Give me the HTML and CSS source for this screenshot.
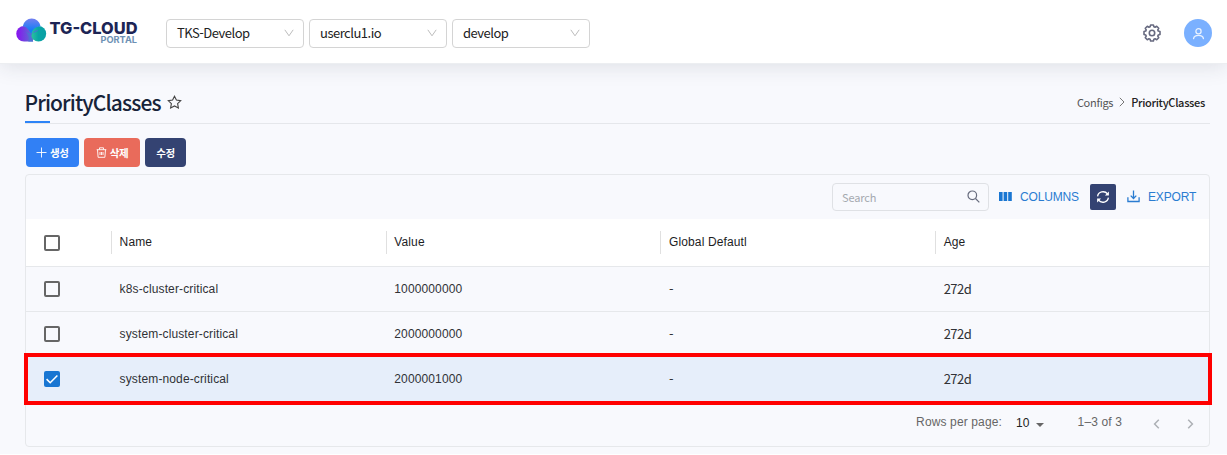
FILE: index.html
```html
<!DOCTYPE html>
<html lang="ko">
<head>
<meta charset="utf-8">
<title>PriorityClasses</title>
<link rel="stylesheet" href="styles.css">
</head>
<body>
<header class="topbar">
  <svg class="logo" width="122" height="28" viewBox="0 0 122 28">
    <defs>
      <linearGradient id="top" x1="0" y1="0" x2="0" y2="1"><stop offset="0" stop-color="#7480f0"/><stop offset=".7" stop-color="#147ef5"/></linearGradient>
      <linearGradient id="left" x1="0" y1="0" x2="1" y2="0"><stop offset="0" stop-color="#8a10f0"/><stop offset="1" stop-color="#5a74d0"/></linearGradient>
      <linearGradient id="right" x1="0" y1="0" x2="1" y2="0"><stop offset="0" stop-color="#2fc49e"/><stop offset=".5" stop-color="#08a5a5"/><stop offset="1" stop-color="#0a9fa5"/></linearGradient>
    </defs>
    <path d="M8 10a7.500 7.500 0 0 0 0 15.500h9V12z" fill="url(#left)"/>
    <circle cx="22.500" cy="17.800" r="7.700" fill="url(#right)"/>
    <path d="M6.800 10.200a9 9 0 0 1 17.800 0c-5 .2-9 3.500-9.200 9-2-5.500-4.500-8.500-8.600-9z" fill="url(#top)"/>
    <path d="M8 14.500c3 3.500 11 3.500 14.500-.5-4 .5-7.200 2.500-7.200 6 0 2.500.7 4 2 5.500h-5c1.500-4 0-8-4.300-11z" fill="#4f6fd4"/>
    <text class="logo-main" x="33.500" y="17.700" textLength="88" lengthAdjust="spacingAndGlyphs">TG-CLOUD</text>
    <text class="logo-sub" x="84.500" y="27" textLength="36.500" lengthAdjust="spacingAndGlyphs">PORTAL</text>
  </svg>
  <div class="selects">
    <div class="select"><span>TKS-Develop</span><svg width="10" height="8" viewBox="0 0 10 8"><path d="M.8.8 5 6.800 9.200.8"/></svg></div>
    <div class="select"><span>userclu1.io</span><svg width="10" height="8" viewBox="0 0 10 8"><path d="M.8.8 5 6.800 9.200.8"/></svg></div>
    <div class="select"><span>develop</span><svg width="10" height="8" viewBox="0 0 10 8"><path d="M.8.8 5 6.800 9.200.8"/></svg></div>
  </div>
  <svg class="gear" width="18" height="18" viewBox="0 0 18 18"><path d="M7.600 1h2.800l.5 1.700 1.200.5 1.600-.9 2 2-.9 1.600.5 1.200 1.700.5v2.800l-1.700.5-.5 1.200.9 1.600-2 2-1.600-.9-1.200.5-.5 1.700H7.600l-.5-1.700-1.200-.5-1.600.9-2-2 .9-1.600-.5-1.200L1 10.400V7.600l1.700-.5.5-1.200-.9-1.600 2-2 1.600.9 1.200-.5z"/><circle cx="9" cy="9" r="2.700"/></svg>
  <div class="avatar"><svg width="14" height="14" viewBox="0 0 14 14"><circle cx="7" cy="4.500" r="2.800"/><path d="M1.700 12.500c.7-4.500 9.900-4.500 10.600 0"/></svg></div>
</header>
<main class="page">
  <div class="heading">
    <h1>PriorityClasses</h1>
    <svg class="star" width="15" height="14" viewBox="0 0 15 14"><path d="m7.500 1.300 1.900 3.800 4.300.6-3.100 3 .8 4.200-3.900-2-3.900 2 .8-4.200-3.100-3 4.300-.6z"/></svg>
    <nav class="crumbs"><span>Configs</span><svg width="6" height="10" viewBox="0 0 6 10"><path d="m.8.8 4.200 4.200-4.200 4.200"/></svg><strong>PriorityClasses</strong></nav>
  </div>
  <div class="actions">
    <button class="btn create"><svg width="11" height="11" viewBox="0 0 11 11"><path d="M5.500.5v10M.5 5.500h10"/></svg>생성</button>
    <button class="btn delete"><svg width="11" height="11" viewBox="0 0 11 11"><path d="M.7 2.700h9.600M3.500 2.500V.8h4v1.700M1.500 2.700l.6 7.600h6.800l.6-7.600M4 5v3M5.500 5v3M7 5v3"/></svg>삭제</button>
    <button class="btn edit">수정</button>
  </div>
  <section class="grid">
    <div class="toolbar">
      <div class="search"><span>Search</span><svg width="13" height="13" viewBox="0 0 13 13"><circle cx="5.300" cy="5.300" r="4.300"/><path d="m8.500 8.500 3.800 3.800"/></svg></div>
      <svg class="columns-icon" width="13" height="9" viewBox="0 0 13 9"><path d="M0 0h3.600v9H0zM4.600 0h3.600v9H4.600zM9.200 0h3.600v9H9.200z"/></svg>
      <span class="tool columns">COLUMNS</span>
      <div class="refresh"><svg width="14" height="14" viewBox="0 0 14 14"><path d="M1.600 6.300C2.200 1.700 8.500.1 11.600 4M12.400 7.700c-.6 4.600-6.900 6.200-10 2.300"/><path class="solid" d="M12.900 1.500v4h-4zM1.100 12.500v-4h4z"/></svg></div>
      <svg class="export-icon" width="13" height="13" viewBox="0 0 13 13"><path d="M6.500.5v7.800M3.700 5.600l2.800 2.900 2.800-2.900M.9 7.200v4.300h11.200V7.200"/></svg>
      <span class="tool export">EXPORT</span>
    </div>
    <div class="row head">
      <div><i class="check"></i></div><div>Name</div><div>Value</div><div>Global Defautl</div><div>Age</div>
    </div>
    <div class="row">
      <div><i class="check"></i></div><div>k8s-cluster-critical</div><div>1000000000</div><div class="kr">-</div><div class="kr">272d</div>
    </div>
    <div class="row">
      <div><i class="check"></i></div><div>system-cluster-critical</div><div>2000000000</div><div class="kr">-</div><div class="kr">272d</div>
    </div>
    <div class="row selected">
      <div><i class="check on"><svg width="16" height="16" viewBox="0 0 16 16"><path d="m2.600 8.100 3.600 3.600 7.200-7.200"/></svg></i></div><div>system-node-critical</div><div>2000001000</div><div class="kr">-</div><div class="kr">272d</div>
    </div>
    <div class="pager">
      <span>Rows per page:</span><span class="num">10</span>
      <svg class="caret" width="8" height="4" viewBox="0 0 8 4"><path d="M0 0h8L4 4z"/></svg>
      <span class="range">1–3 of 3</span>
      <svg class="arrow prev" width="7" height="10" viewBox="0 0 7 10"><path d="M5.800.8 1.600 5l4.200 4.200"/></svg>
      <svg class="arrow" width="7" height="10" viewBox="0 0 7 10"><path d="M1.200.8 5.400 5 1.200 9.200"/></svg>
    </div>
  </section>
</main>
</body>
</html>
```
FILE: styles.css
```css
* { box-sizing: border-box; }
body { margin: 0; height: 454px; overflow: hidden; background: #f8f9fd; font-family: "Noto Sans CJK KR", sans-serif; font-size: 13px; color: #222; }
html { background: #fff; height: 455px; overflow: hidden; }
svg { flex: none; display: block; fill: none; }

.topbar { position: relative; height: 64px; display: flex; align-items: center; padding: 3px 15px 0 16px; background: #fff; border-bottom: 1px solid #eceef1; box-shadow: 0 2px 20px rgba(40, 45, 60, .13); }
.logo { margin-top: -7px; }
.logo-main { font: 800 16.500px Inter, sans-serif; fill: #1d2555; }
.logo-sub { font: 700 9px Inter, sans-serif; fill: #6d91b4; }
.selects { display: flex; gap: 5px; margin: 0 0 0 28px; }
.select { width: 138px; height: 29px; display: flex; align-items: center; justify-content: space-between; padding: 0 9px 1px 10px; border: 1px solid #d4d4d4; border-radius: 4px; font-size: 13px; line-height: 26px; letter-spacing: -.5px; }
.select svg { stroke: #bcbcbc; }
.gear { margin: -1px 0 0 auto; stroke: #676a80; stroke-width: 1.600; stroke-linejoin: round; }
.avatar { width: 28px; height: 28px; margin: -1px 0 0 23px; border-radius: 50%; background: #7ab0ff; display: flex; align-items: center; justify-content: center; }
.avatar svg { width: 13px; height: 13px; margin-top: 1px; stroke: #e9f2ff; stroke-width: 1.400; stroke-linecap: round; }

.page { padding: 22px 17px 0 25px; }
.heading { height: 38px; display: flex; align-items: center; padding: 0 5px 5px 0; border-bottom: 1px solid #e5e7eb; background: linear-gradient(#2d84f7, #2d84f7) left bottom / 25px 2px no-repeat; }
h1 { margin: -1px 0 0 -.5px; font-size: 21px; font-weight: 500; line-height: 32px; letter-spacing: -.9px; color: #172339; }
.star { margin-left: 6.500px; stroke: #444; stroke-width: 1.100; }
.crumbs { margin-left: auto; display: flex; align-items: center; gap: 6px; font-size: 11px; line-height: 16px; letter-spacing: -.3px; color: #555; }
.crumbs svg { stroke: #777; }
.crumbs strong { font-weight: 500; color: #222; }

.actions { display: flex; gap: 5px; padding: 14px 0 7px .5px; }
.btn { height: 29px; border: 0; border-radius: 4px; padding: 0; display: flex; align-items: center; justify-content: center; gap: 3px; color: #fff; font: 700 10.500px/28px "Noto Sans CJK KR", sans-serif; letter-spacing: -.3px; }
.btn svg { stroke: #fff; stroke-width: .9; }
.create { width: 53.500px; background: #3180f5; }
.delete { width: 56px; background: #e96b5b; }
.edit { width: 41px; background: #344372; }

.grid { height: 273px; border: 1px solid #e6e8eb; border-radius: 4px; font-family: "Liberation Sans", sans-serif; font-size: 12px; letter-spacing: .13px; }
.toolbar { height: 44px; display: flex; align-items: center; justify-content: flex-end; padding: 0 13px 1px 0; }
.search { width: 157px; height: 28px; margin-right: 10px; display: flex; align-items: center; justify-content: space-between; padding: 0 8px 0 9px; border: 1px solid #dfe1e5; border-radius: 4px; color: #a5a9b0; font: 11px/26px "Noto Sans CJK KR", sans-serif; letter-spacing: -.15px; }
.search svg { stroke: #666b7d; stroke-width: 1.200; }
.columns-icon { fill: #1976d2; margin-right: 8px; }
.tool { color: #2a7cd1; font: 12px/20px "Liberation Sans", sans-serif; letter-spacing: -.15px; }
.columns { width: 59px; }
.refresh { width: 26px; height: 26px; margin: 0 11px; border-radius: 2px; background: #344372; display: flex; align-items: center; justify-content: center; }
.refresh svg { margin-top: 1px; stroke: #fff; stroke-width: 1.300; }
.refresh .solid { fill: #fff; stroke: none; }
.export-icon { stroke: #2a7cd1; stroke-width: 1.300; margin-right: 8px; }
.export { width: 48px; }

.row { height: 45px; display: grid; grid-template-columns: 85px repeat(4, 274.700px); align-items: center; border-bottom: 1px solid #e6e8eb; color: #303236; line-height: 22px; }
.row > div { padding-left: 8.600px; }
.row > div:first-child { padding-left: 17.500px; }
.head { height: 48px; background: #fff; color: #1d1d1f; }
.head > div:not(:first-child) { border-left: 1px solid #e0e0e0; padding: 0 0 1px 7.600px; }
.kr { font: 13px/20px "Noto Sans CJK KR", sans-serif; letter-spacing: -.5px; }
.selected { position: relative; height: 52px; margin: -4px -3px 0 -2px; padding: 0 1px; border: 4px solid #f00; background: #e6eefa; grid-template-columns: 82px repeat(3, 274.700px) 1fr; }
.selected > div:first-child { padding-left: 14.500px; }
.check { display: block; width: 16px; height: 16px; border: 2px solid #666; border-radius: 2px; }
.check.on { border: 0; background: #1976d2; }
.check.on svg { stroke: #fff; stroke-width: 1.600; }

.pager { height: 41px; display: flex; align-items: center; padding: 0 15px 7px 0; justify-content: flex-end; color: #666; }
.num { color: #222; margin-left: 14px; padding-top: 2px; }
.caret { fill: #666; margin: 5px 34px 0 6px; }
.range { margin-right: 31px; }
.arrow { stroke: #adb0b5; stroke-width: 1.500; margin-top: 4px; }
.prev { margin-right: 27px; }
```
